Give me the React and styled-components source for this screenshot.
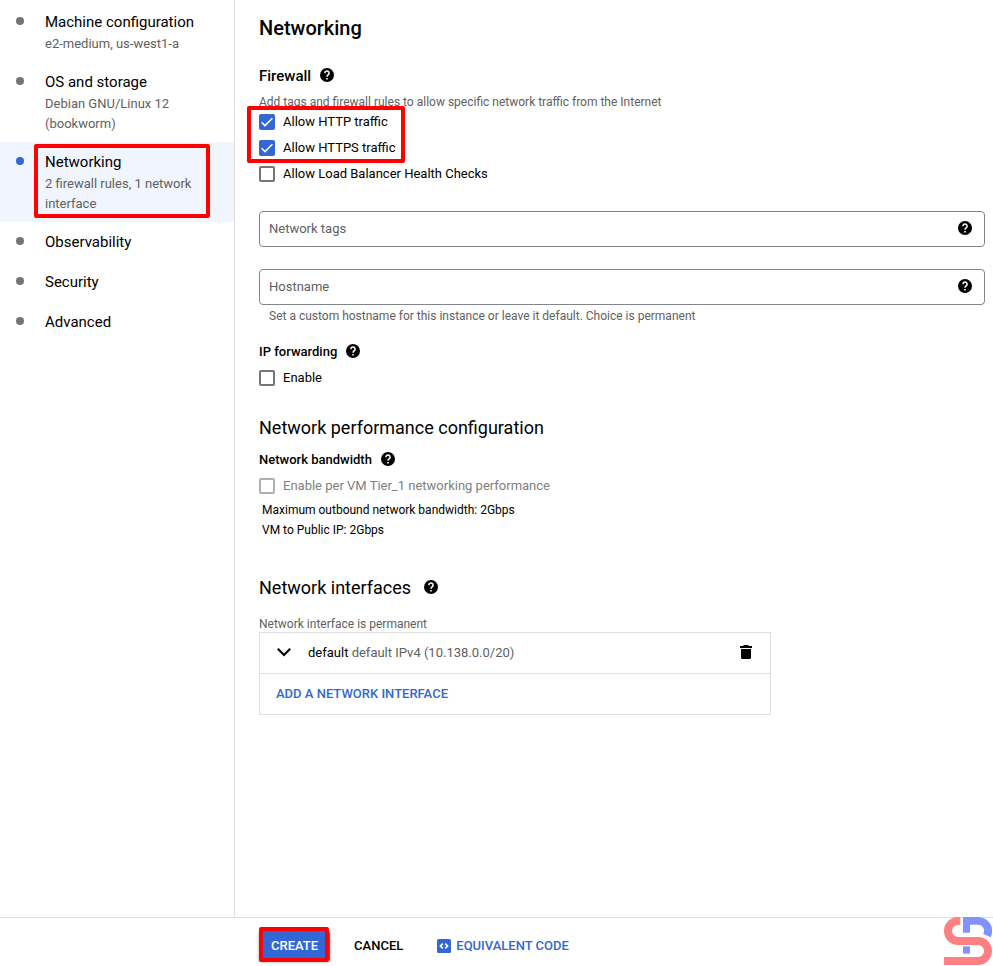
import React, { useState } from 'react';
import styled, { createGlobalStyle } from 'styled-components';

const GlobalStyle = createGlobalStyle`
  * {
    box-sizing: border-box;
  }
  body {
    margin: 0;
    background: #ffffff;
    color: #000000;
    font-family: Roboto, 'Liberation Sans', sans-serif;
    font-size: 13px;
    line-height: 20px;
  }
  button, input {
    font-family: inherit;
    font-size: inherit;
    line-height: inherit;
  }
`;

const Page = styled.div`
  display: flex;
  flex-direction: column;
  min-height: 100vh;
`;

const Body = styled.div`
  flex: 1;
  display: flex;
`;

const Sidebar = styled.nav`
  flex: 0 0 235px;
  padding-top: 2px;
  border-right: 1px solid #e0e0e0;
`;

const StepList = styled.ul`
  margin: 0;
  padding: 0;
  list-style: none;
`;

const StepLink = styled.a`
  display: flex;
  gap: 21px;
  padding: 10px 16px;
  color: inherit;
  text-decoration: none;
  background: ${(props) => (props.$active ? '#f0f5ff' : 'transparent')};
`;

const Dot = styled.span`
  flex: none;
  width: 8px;
  height: 8px;
  margin-top: 5px;
  border-radius: 50%;
  background: ${(props) => (props.$active ? '#3367d6' : '#757575')};
`;

const StepText = styled.span`
  position: relative;
  flex: 1;
`;

const StepTitle = styled.span`
  display: block;
  font-size: 15px;
`;

const StepNote = styled.span`
  display: block;
  padding-top: 2px;
  margin-bottom: -2px;
  color: #616161;
`;

const Highlight = styled.span`
  position: absolute;
  inset: ${(props) => props.$inset};
  border: 4px solid #ff0000;
  border-radius: 2px;
  pointer-events: none;
`;

const Main = styled.main`
  flex: 1;
  min-width: 0;
  padding: 16px 8px 24px 24px;
`;

const PageTitle = styled.h1`
  margin: 0 0 24px;
  font-size: 20px;
  font-weight: 500;
  line-height: 24px;
`;

const SectionTitle = styled.h2`
  display: flex;
  align-items: center;
  gap: 13px;
  margin: 0;
  font-size: 18px;
  font-weight: 400;
  line-height: 24px;
`;

const GroupTitle = styled.h3`
  display: flex;
  align-items: center;
  gap: 9px;
  margin: 0 0 1px;
  font-size: ${(props) => (props.$large ? '15px' : '13px')};
  font-weight: 500;
  line-height: 24px;
`;

const HelpButton = styled.button`
  display: flex;
  padding: 0 0 2px;
  border: 0;
  background: none;
  color: #000000;
  cursor: pointer;
`;

const Hint = styled.p`
  margin: 0;
  font-size: 12px;
  line-height: 16px;
  color: #616161;
`;

const FirewallGroup = styled.section`
  display: flex;
  flex-direction: column;
  align-items: flex-start;
  ${Hint} {
    margin: 5px 0 -1px;
  }
`;

const Marked = styled.div`
  position: relative;
`;

const CheckLabel = styled.label`
  display: flex;
  align-items: center;
  gap: 8px;
  height: 26px;
  color: ${(props) => (props.$disabled ? '#808080' : '#000000')};
`;

const CheckBox = styled.span`
  display: grid;
  > * {
    grid-area: 1 / 1;
  }
  svg {
    pointer-events: none;
  }
`;

const CheckInput = styled.input`
  appearance: none;
  width: 16px;
  height: 16px;
  margin: 0;
  border: 2px solid #757575;
  border-radius: 2px;
  &:checked {
    border-color: #3367d6;
    background: #3367d6;
  }
  &:disabled {
    border-color: #b0b0b0;
  }
`;

const Fields = styled.div`
  display: flex;
  flex-direction: column;
  gap: 22px;
  margin-top: 24px;
`;

const FieldBox = styled.div`
  display: flex;
  align-items: center;
  height: 36px;
  padding-right: 12px;
  border: 1px solid #80868b;
  border-radius: 4px;
`;

const FieldInput = styled.input`
  flex: 1;
  min-width: 0;
  padding: 0 9px;
  border: 0;
  outline: 0;
  background: none;
  &::placeholder {
    color: #616161;
    opacity: 1;
  }
`;

const FieldHint = styled(Hint)`
  padding: 3px 10px 0;
`;

const Forwarding = styled.section`
  margin-top: 16px;
`;

const Performance = styled.section`
  margin-top: 25px;
  ${GroupTitle} {
    margin-top: 8px;
  }
`;

const Bandwidth = styled.p`
  margin: 1px 3px 0;
  font-size: 12px;
`;

const Interfaces = styled.section`
  margin-top: 36px;
  ${Hint} {
    margin-top: 16px;
  }
`;

const InterfaceCard = styled.div`
  max-width: 512px;
  border: 1px solid #e0e0e0;
`;

const InterfaceRow = styled.div`
  display: flex;
  align-items: center;
  height: 40px;
  padding: 0 16px;
  & + & {
    height: 41px;
    border-top: 1px solid #e0e0e0;
  }
`;

const IconButton = styled.button`
  display: flex;
  padding: 0;
  border: 0;
  background: none;
  color: #000000;
  cursor: pointer;
`;

const InterfaceName = styled.span`
  flex: 1;
  padding-left: 16px;
  color: #616161;
  b {
    font-weight: 400;
    color: #000000;
  }
`;

const TextButton = styled.button`
  display: flex;
  align-items: center;
  gap: 5px;
  padding: 0;
  border: 0;
  background: none;
  color: ${(props) => (props.$primary ? '#3367d6' : '#000000')};
  font-weight: 500;
  cursor: pointer;
`;

const Footer = styled.footer`
  position: relative;
  display: flex;
  align-items: center;
  height: 49px;
  padding: 8px 64px 0 259px;
  border-top: 1px solid #e0e0e0;
`;

const CreateWrap = styled.div`
  position: relative;
  margin-right: 24px;
`;

const CreateButton = styled.button`
  display: block;
  height: 30px;
  padding: 0 12px;
  border: 0;
  border-radius: 2px;
  background: #3367d6;
  color: #ffffff;
  font-weight: 500;
  box-shadow: 0 1px 3px rgba(0, 0, 0, 0.4);
  cursor: pointer;
`;

const CodeButton = styled(TextButton)`
  margin-left: 34px;
`;

const Logo = styled.svg`
  position: absolute;
  right: 1px;
  bottom: 1px;
`;

const steps = [
  { id: 'machine', title: 'Machine configuration', note: 'e2-medium, us-west1-a' },
  { id: 'storage', title: 'OS and storage', note: 'Debian GNU/Linux 12 (bookworm)' },
  { id: 'networking', title: 'Networking', note: '2 firewall rules, 1 network interface' },
  { id: 'observability', title: 'Observability' },
  { id: 'security', title: 'Security' },
  { id: 'advanced', title: 'Advanced' },
];

const Help = ({ topic }) => (
  <HelpButton type="button" aria-label={'Help: ' + topic}>
    <svg width="14" height="14" viewBox="0 0 14 14" aria-hidden="true">
      <circle cx="7" cy="7" r="7" />
      <path
        d="M4.900 5.300a2.100 2.100 0 1 1 3.300 1.600c-.700.500-1.200.800-1.200 1.800"
        fill="none"
        stroke="#fff"
        strokeWidth="1.500"
      />
      <path d="M6.200 9.900h1.600v1.600H6.200z" fill="#fff" />
    </svg>
  </HelpButton>
);

const Check = ({ label, initial = false, disabled = false }) => {
  const [checked, setChecked] = useState(initial);
  return (
    <CheckLabel $disabled={disabled}>
      <CheckBox>
        <CheckInput
          type="checkbox"
          checked={checked}
          disabled={disabled}
          onChange={(e) => setChecked(e.target.checked)}
        />
        {checked && (
          <svg width="16" height="16" viewBox="0 0 16 16" aria-hidden="true">
            <path d="M2.6 8.3 6 11.6 13.4 4.2" fill="none" stroke="#fff" strokeWidth="1.5" />
          </svg>
        )}
      </CheckBox>
      {label}
    </CheckLabel>
  );
};

const Field = ({ label, hint }) => (
  <div>
    <FieldBox>
      <FieldInput type="text" placeholder={label} aria-label={label} />
      <Help topic={label} />
    </FieldBox>
    {hint && <FieldHint>{hint}</FieldHint>}
  </div>
);

const App = () => {
  return (
    <Page>
      <GlobalStyle />
      <Body>
        <Sidebar>
          <StepList>
            {steps.map((v) => {
              const active = v.id === 'networking';
              return (
                <li key={v.id}>
                  <StepLink href={'#' + v.id} $active={active}>
                    <Dot $active={active} />
                    <StepText>
                      <StepTitle>{v.title}</StepTitle>
                      {v.note && <StepNote>{v.note}</StepNote>}
                      {active && <Highlight $inset="-8px 8px -6px -11px" />}
                    </StepText>
                  </StepLink>
                </li>
              );
            })}
          </StepList>
        </Sidebar>
        <Main>
          <PageTitle>Networking</PageTitle>
          <FirewallGroup>
            <GroupTitle $large>
              Firewall
              <Help topic="Firewall" />
            </GroupTitle>
            <Hint>Add tags and firewall rules to allow specific network traffic from the Internet</Hint>
            <Marked>
              <Check label="Allow HTTP traffic" initial />
              <Check label="Allow HTTPS traffic" initial />
              <Highlight $inset="-3px -10px -2px -12px" />
            </Marked>
            <Check label="Allow Load Balancer Health Checks" />
          </FirewallGroup>
          <Fields>
            <Field label="Network tags" />
            <Field
              label="Hostname"
              hint="Set a custom hostname for this instance or leave it default. Choice is permanent"
            />
          </Fields>
          <Forwarding>
            <GroupTitle>
              IP forwarding
              <Help topic="IP forwarding" />
            </GroupTitle>
            <Check label="Enable" />
          </Forwarding>
          <Performance>
            <SectionTitle>Network performance configuration</SectionTitle>
            <GroupTitle>
              Network bandwidth
              <Help topic="Network bandwidth" />
            </GroupTitle>
            <Check label="Enable per VM Tier_1 networking performance" disabled />
            <Bandwidth>
              Maximum outbound network bandwidth: 2Gbps
              <br />
              VM to Public IP: 2Gbps
            </Bandwidth>
          </Performance>
          <Interfaces>
            <SectionTitle>
              Network interfaces
              <Help topic="Network interfaces" />
            </SectionTitle>
            <Hint>Network interface is permanent</Hint>
            <InterfaceCard>
              <InterfaceRow>
                <IconButton type="button" aria-label="Expand default">
                  <svg width="16" height="16" viewBox="0 0 16 16" aria-hidden="true">
                    <path d="M1.8 3.8 8 10 14.2 3.8" fill="none" stroke="#000" strokeWidth="2.2" />
                  </svg>
                </IconButton>
                <InterfaceName>
                  <b>default</b> default IPv4 (10.138.0.0/20)
                </InterfaceName>
                <IconButton type="button" aria-label="Delete default">
                  <svg width="16" height="16" viewBox="0 0 16 16" aria-hidden="true">
                    <path d="M2 1h3l1-1h4l1 1h3v2H2zM3 4h10v8.500a1.500 1.500 0 0 1-1.500 1.500h-7A1.500 1.500 0 0 1 3 12.500z" />
                  </svg>
                </IconButton>
              </InterfaceRow>
              <InterfaceRow>
                <TextButton type="button" $primary>
                  ADD A NETWORK INTERFACE
                </TextButton>
              </InterfaceRow>
            </InterfaceCard>
          </Interfaces>
        </Main>
      </Body>
      <Footer>
        <CreateWrap>
          <CreateButton type="button">CREATE</CreateButton>
          <Highlight $inset="-4px 1px -1px 0" />
        </CreateWrap>
        <TextButton type="button">CANCEL</TextButton>
        <CodeButton type="button" $primary>
          <svg width="14" height="14" viewBox="0 0 14 14" aria-hidden="true">
            <rect width="14" height="14" rx="1.500" fill="#3367d6" />
            <path d="M5.800 4.600 3.400 7l2.400 2.400M8.200 4.600 10.600 7 8.200 9.400" fill="none" stroke="#fff" strokeWidth="1.600" />
          </svg>
          EQUIVALENT CODE
        </CodeButton>
        <Logo width="48" height="48" viewBox="0 0 144 144" aria-hidden="true">
          <path d="M57 0h45a42 42 0 0 1 38 61l-22-10a19 19 0 0 0-16-28H78v24H57z" fill="#8093ff" />
          <path d="M57 88h21v22H57z" fill="#8093ff" />
          <path
            d="M49 12H42a30 30 0 0 0 0 60h60a30 30 0 0 1 0 60H0"
            fill="none"
            stroke="#ff8080"
            strokeWidth="24"
          />
        </Logo>
      </Footer>
    </Page>
  );
};

export default App;
